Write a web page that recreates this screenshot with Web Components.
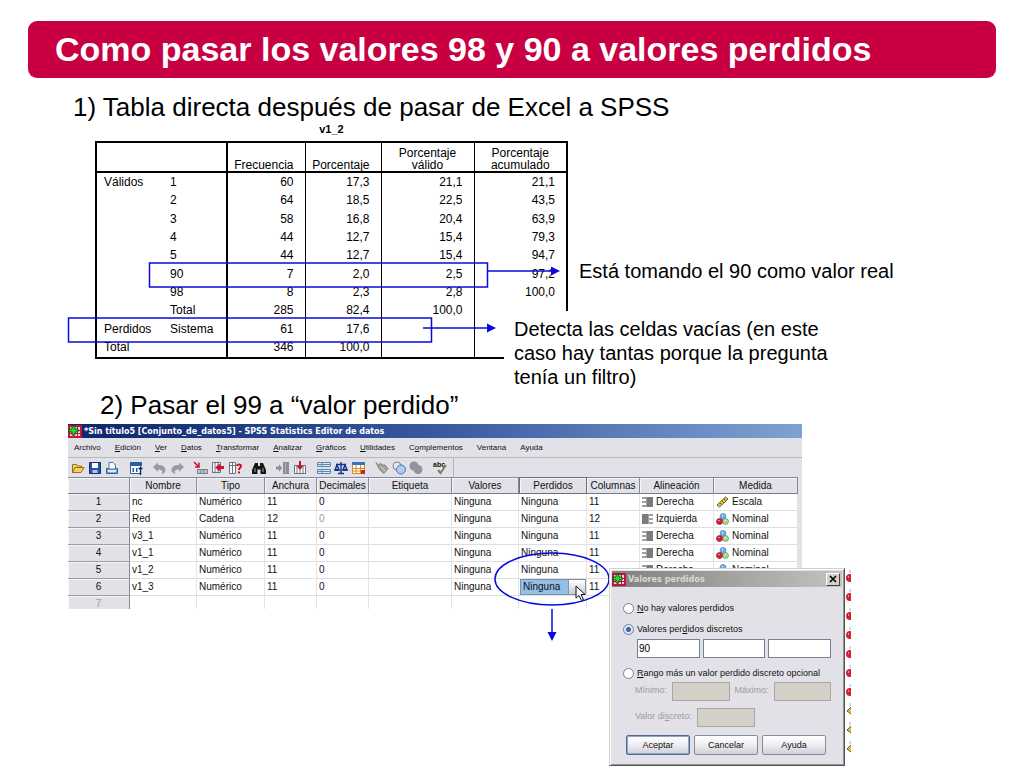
<!DOCTYPE html>
<html lang="es">
<head>
  <meta charset="UTF-8">
  <title>Valores perdidos</title>
<style>
:root {
  --accent-color: #c80041;
  --panel-color: #e2e1e7;
}

body {
  margin: 0;
  min-height: 100vh;
  background: white;
  color: black;
  font-family: "Liberation Sans", Arial, sans-serif;
}
</style>
</head>
<body>
<slide-page>
  <slide-title slot="title">Como pasar los valores 98 y 90 a valores perdidos</slide-title>

  <slide-step class="first">
    <span slot="heading">1) Tabla directa después de pasar de Excel a SPSS</span>
    <freq-table>v1_2</freq-table>
  </slide-step>

  <slide-step class="second">
    <span slot="heading">2) Pasar el 99 a “valor perdido”</span>
    <spss-window>
      <span slot="title">*Sin título5 [Conjunto_de_datos5] - SPSS Statistics Editor de datos</span>
      <spss-menu slot="bars"></spss-menu>
      <spss-toolbar slot="bars"></spss-toolbar>
      <variable-grid></variable-grid>
      <missing-dialog slot="over">Valores perdidos</missing-dialog>
    </spss-window>
  </slide-step>
</slide-page>

<script>
const define = (name, html, setup) => {
  const template = document.createElement("template");
  template.innerHTML = html;

  customElements.define(name, class extends HTMLElement {
    constructor() {
      super();
      this.attachShadow({ mode: "open" });
      this.shadowRoot.appendChild(template.content.cloneNode(true));
      if (setup) setup(this.shadowRoot);
    }
  });
};

const appIcon = `
  <svg class="app" width="14" height="13" viewBox="0 0 14 13" aria-hidden="true">
    <path fill="#c4143c" d="M0 0h14v13H0z"/>
    <path fill="#f6d8dc" d="M2 2h10v9H2z"/>
    <path stroke="#c4143c" d="M2 5.500h10M2 8.500h10M5.500 2v9M9.500 2v9"/>
    <path fill="#28d828" stroke="#053d05" stroke-width=".8" d="M4 1h3v3h3v3H7v3H4V7H1V4h3z"/>
  </svg>`;

define("slide-page", `
  <style>
    :host { display: block; box-sizing: border-box; min-height: 100vh; padding: 21px 28px 0; }
  </style>
  <slot name="title"></slot>
  <main><slot></slot></main>
`);

define("slide-title", `
  <style>
    :host { display: block; }
    h1 {
      margin: 0;
      padding: 0 27px;
      border-radius: 9px;
      background: var(--accent-color);
      color: white;
      font-size: 34px;
      line-height: 57px;
    }
  </style>
  <h1><slot></slot></h1>
`);

define("slide-step", `
  <style>
    :host { display: block; padding-left: 40px; }
    h2 {
      margin: 0;
      padding-left: 5px;
      font-size: 26px;
      font-weight: normal;
      line-height: 30px;
    }
    :host(.first) { padding-top: 14px; }
    :host(.second) { padding-top: 31px; }
    :host(.second) h2 { padding-left: 32px; padding-bottom: 4px; }
  </style>
  <h2><slot name="heading"></slot></h2>
  <slot></slot>
`);

// frequency table with its two marked rows
const freqRows = [
  ["Válidos", "1", "60", "17,3", "21,1", "21,1"],
  ["", "2", "64", "18,5", "22,5", "43,5"],
  ["", "3", "58", "16,8", "20,4", "63,9"],
  ["", "4", "44", "12,7", "15,4", "79,3"],
  ["", "5", "44", "12,7", "15,4", "94,7"],
  ["", "90", "7", "2,0", "2,5", "97,2"],
  ["", "98", "8", "2,3", "2,8", "100,0"],
  ["", "Total", "285", "82,4", "100,0", ""],
  ["Perdidos", "Sistema", "61", "17,6", "", ""],
  ["Total", "", "346", "100,0", "", ""],
];

define("freq-table", `
  <style>
    :host { display: block; position: relative; }
    table {
      margin-left: 27px;
      width: 473px;
      height: 218px;
      table-layout: fixed;
      border-collapse: collapse;
      font-size: 12px;
      line-height: 12px;
    }
    caption { height: 19px; font-size: 11px; font-weight: bold; line-height: 14px; }
    thead, tbody { border: 2px solid black; }
    th { font-weight: normal; padding: 0; }
    thead th { height: 28px; vertical-align: bottom; border-left: 1px solid black; }
    thead th.right { text-align: right; padding-right: 11px; }
    tbody th { text-align: left; padding: 0 0 1px 8px; }
    td { padding: 0 11px 1px 0; text-align: right; border-left: 1px solid black; }
    tbody th:first-child { padding-left: 7px; }
    thead th:first-child { border-left: 2px solid black; }
    thead th:nth-child(2), td:nth-child(3) { border-left: 2px solid black; }
    .note {
      position: absolute;
      background: white;
      padding: 0 10px;
      font-size: 20px;
      line-height: 24px;
    }
    .real { left: 501px; top: 137px; }
    .empty { left: 436px; top: 189px; width: 330px; padding-top: 6px; }
    svg { position: absolute; left: 0; top: 0; overflow: visible; }
  </style>
  <table>
    <caption><slot></slot></caption>
    <colgroup><col style="width:66px"><col style="width:65px"><col style="width:78px"><col style="width:76px"><col style="width:93px"><col style="width:93px"></colgroup>
    <thead>
      <tr>
        <th colspan="2"></th>
        <th class="right">Frecuencia</th>
        <th class="right">Porcentaje</th>
        <th>Porcentaje<br>válido</th>
        <th>Porcentaje<br>acumulado</th>
      </tr>
    </thead>
    <tbody></tbody>
  </table>
  <div class="note real">Está tomando el 90 como valor real</div>
  <div class="note empty">Detecta las celdas vacías (en este caso hay tantas porque la pregunta tenía un filtro)</div>
  <svg width="500" height="236" fill="none" stroke="#0a0adc" stroke-width="1.500" aria-hidden="true">
    <path d="M81.500 141h338v24h-338zM.500 196h363v24H.500zM420 149h66M355 206h66"/>
    <path fill="#0a0adc" stroke="none" d="M483 144.500l9 4.500-9 4.500zM419 201.500l9 4.500-9 4.500z"/>
  </svg>
`, (root) => {
  root.querySelector("tbody").innerHTML = freqRows.map(([group, value, ...data]) =>
    `<tr><th>${group}</th><th>${value}</th>${data.map((n) => `<td>${n}</td>`).join("")}</tr>`
  ).join("");
});

define("spss-window", `
  <style>
    :host { display: block; position: relative; max-width: 734px; }
    header {
      display: flex;
      align-items: center;
      gap: 2px;
      height: 14px;
      background: linear-gradient(90deg, #0d246c, #38589f 50%, #7fa2d2);
      color: white;
      font: bold 8px "DejaVu Sans", sans-serif;
      white-space: nowrap;
    }
    .marks { position: absolute; left: 420px; top: 121px; }
  </style>
  <header>${appIcon}<slot name="title"></slot></header>
  <slot name="bars"></slot>
  <slot></slot>
  <svg class="marks" width="130" height="100" fill="none" stroke="#0a0adc" stroke-width="1.500" aria-hidden="true">
    <ellipse cx="64" cy="34" rx="57" ry="26"/>
    <path d="M64 64v26"/>
    <path fill="#0a0adc" stroke="none" d="M59.500 87h9L64 96z"/>
  </svg>
  <slot name="over"></slot>
`);

define("spss-menu", `
  <style>
    :host { display: block; background: var(--panel-color); border-bottom: 1px solid #b9b8c0; }
    nav { display: flex; gap: 14px; height: 19px; padding-left: 6px; }
    button { padding: 0; border: 0; background: none; color: #111; font: 8px "Liberation Sans", sans-serif; }
  </style>
  <nav>
    <button>Archivo</button>
    <button><u>E</u>dición</button>
    <button><u>V</u>er</button>
    <button><u>D</u>atos</button>
    <button><u>T</u>ransformar</button>
    <button><u>A</u>nalizar</button>
    <button><u>G</u>ráficos</button>
    <button><u>U</u>tilidades</button>
    <button>C<u>o</u>mplementos</button>
    <button>Ventana</button>
    <button>Ayuda</button>
  </nav>
`);

// 14x14 glyphs; the third value opens a wider gap before the group
const tools = [
  ["Abrir", `<path fill="#f4cf63" stroke="#94701c" d="M1.500 11.500v-8h4l1 1.500h4v2M1.500 11.500l2.500-5h9l-3 5z"/>`],
  ["Guardar", `<path fill="#2453b4" stroke="#12306f" d="M1.500 1.500h11v11h-11z"/><path fill="#fff" d="M4 2h6v5H4z"/><path fill="#b9c6e4" d="M4.500 9h5v3h-5z"/>`],
  ["Imprimir", `<path fill="#7ba5d4" stroke="#355e8d" d="M1.500 7.500h11v5h-11z"/><path fill="#fff" stroke="#4674a4" d="M4 8V1.500h4L10.500 4v4z"/><path fill="#dce9f6" d="M3 9h8v2H3z"/>`],
  ["Recuperar", `<path fill="#fff" stroke="#2860a2" d="M1.500 2.500h10v10h-10z"/><path fill="#2860a2" d="M1 1h12v4H1zM3.500 7h1.500v4H3.500zM7 7h1.500v4H7z"/><path stroke="#10253c" stroke-width="1.400" d="M11.500 6v8M9.500 7.500h4"/>`, 1],
  ["Deshacer", `<path fill="#9a9aa0" d="M0 6l5-4.500V4c5 0 7.500 2 7.500 5 0 2.500-2 4-4.500 4 2.500-2 1.500-4.500-3-4.500V11z"/>`, 1],
  ["Rehacer", `<path fill="#9a9aa0" d="M14 6L9 1.500V4C4 4 1.500 6 1.500 9c0 2.500 2 4 4.500 4C3.500 11 4.500 8.500 9 8.500V11z"/>`],
  ["Ir a caso", `<path fill="#c4c6cf" stroke="#777d88" d="M3.500 8.500h10v4h-10z"/><path stroke="#777d88" d="M7 9v3M10 9v3"/><path stroke="#c8102e" stroke-width="1.500" d="M0 1l4.500 4.500M5 1.500V6H1"/>`, 1],
  ["Ir a variable", `<path fill="#fff" stroke="#68717f" d="M1.500 1.500h8v10h-8z"/><path stroke="#68717f" d="M4 2v9M7 2v9"/><path fill="#d0112e" d="M4 6.500L9 2.500v2.500h4v3H9v2.500z"/>`],
  ["Variables", `<path fill="#fff" stroke="#68717f" d="M1.500 1.500h6v11h-6z"/><path stroke="#68717f" d="M4.500 2v10M2 4.500h5"/><path stroke="#d0112e" stroke-width="2" d="M9 5c0-2 4-2 4 0 0 2-2 1.500-2 4M11 10.500v2"/>`],
  ["Buscar", `<path fill="#151515" d="M3 2h3v3h2V2h3l3 7v4H8.500V8.500h-3V13H0V9z"/><path stroke="#fff" stroke-width=".6" d="M3 7v4M11 7v4"/>`, 1],
  ["Insertar caso", `<path fill="#8c8c94" d="M7 1h6v12H7zM0 5.500h3V3l3 4-3 4V8.500H0z"/><path stroke="#b4b4bc" d="M9.500 2v10"/>`, 1],
  ["Insertar variable", `<path fill="#fff" stroke="#68717f" d="M1.500 4.500h11v8h-11z"/><path stroke="#68717f" d="M4 5v7M10 5v7M7 8v4"/><path fill="#d0112e" d="M6 0h2v5h2.500L7 9 3.500 5H6z"/>`],
  ["Segmentar archivo", `<path fill="#d9e9f6" stroke="#5c89b0" d="M.500 1.500h13v4H.500zM.500 8.500h13v4H.500z"/><path stroke="#5c89b0" d="M5 2v3M5 9v3M1 3.500h12M1 10.500h12"/>`, 1],
  ["Ponderar casos", `<path fill="none" stroke="#16368d" stroke-width="1.500" d="M7 1v11M4 12.500h6M2 3.500h10M3 4L1 9h4zM11 4L9 9h4z"/><path fill="#16368d" d="M0 8h6L4.500 10h-3zM8 8h6l-1.500 2h-3z"/>`],
  ["Etiquetas de valor", `<path fill="#fff" stroke="#d48b20" d="M1.500 2.500h12v10h-12z"/><path fill="#3974b7" d="M1 1h13v3H1z"/><path stroke="#d48b20" d="M2 7.500h11M2 10h7M5 4v8M9.500 4v8"/><path fill="#c22c24" d="M10 9h4v4h-4z"/>`],
  ["Conjuntos de variables", `<path fill="#a5a59f" stroke="#85857f" d="M1 1.500l3 3 1.500-2.500 1.500 2h3l3 3.500-4 5-4.500-4z"/><path stroke="#d8d8d4" d="M6 6l4 4"/>`, 1],
  ["Usar conjuntos", `<circle cx="5" cy="5" r="4" fill="#e9e9ee" stroke="#7c8390"/><circle cx="9" cy="8.500" r="4.500" fill="#b3cdec" stroke="#4a72b0"/>`],
  ["Mostrar todas", `<circle cx="5" cy="5" r="4.500" fill="#929298"/><circle cx="9" cy="8.500" r="4.500" fill="#929298"/>`],
  ["Ortografía", `<text x="0" y="6" font-size="7" font-weight="bold" fill="#111">abc</text><path fill="none" stroke="#77855f" stroke-width="2" d="M5 9l2.500 3L13 4"/>`, 1],
];

define("spss-toolbar", `
  <style>
    :host { display: block; background: var(--panel-color); }
    div { display: flex; align-items: center; gap: 3px; width: 382px; height: 19px; padding-left: 3px; border-right: 1px solid #b4b3bb; }
    button { display: grid; flex: none; padding: 0; border: 0; background: none; }
    .wide { margin-left: 7px; }
    svg { width: 14px; height: 14px; overflow: visible; }
  </style>
  <div role="toolbar"></div>
`, (root) => {
  root.querySelector("div").innerHTML = tools.map(([label, shape, wide]) =>
    `<button class="${wide ? "wide" : ""}" aria-label="${label}"><svg viewBox="0 0 14 14" fill="none">${shape}</svg></button>`
  ).join("");
});

const alignRight = `<svg width="11" height="10" viewBox="0 0 11 10"><path stroke="#444" stroke-width="1.200" d="M0 1h11M4 3h7M0 5h11M4 7h7M0 9h11"/><path fill="#444" d="M5 0h6v10H5z" opacity=".4"/></svg>`;
const alignLeft = `<svg width="11" height="10" viewBox="0 0 11 10"><path stroke="#444" stroke-width="1.200" d="M0 1h11M0 3h7M0 5h11M0 7h7M0 9h11"/><path fill="#444" d="M0 0h6v10H0z" opacity=".4"/></svg>`;
const scaleIcon = `<svg width="13" height="12" viewBox="0 0 13 12"><path fill="#e2c84a" stroke="#6d5b14" d="M1 9l8.500-8L12 3 3.500 11z"/><path stroke="#6d5b14" d="M4 7l1.500 1.500M6 5l1.500 1.500M8 3l1.500 1.500"/></svg>`;
const nominalIcon = `<svg width="13" height="12" viewBox="0 0 13 12"><circle cx="7" cy="3.500" r="3" fill="#78aee5" stroke="#3a72b4" stroke-width=".6"/><circle cx="9.500" cy="8.500" r="3" fill="#a4d890" stroke="#4c8a44" stroke-width=".6"/><circle cx="3.500" cy="8.500" r="3" fill="#d42038" stroke="#8c0c20" stroke-width=".6"/><path stroke="#fff" d="M2.500 7.500h1M6 2.500h1M9 7.500h1"/></svg>`;

const variables = [
  ["nc", "Numérico", "11", "Derecha", "Escala"],
  ["Red", "Cadena", "12", "Izquierda", "Nominal"],
  ["v3_1", "Numérico", "11", "Derecha", "Nominal"],
  ["v1_1", "Numérico", "11", "Derecha", "Nominal"],
  ["v1_2", "Numérico", "11", "Derecha", "Nominal"],
  ["v1_3", "Numérico", "11", "", ""],
];

define("variable-grid", `
  <style>
    :host { display: block; height: 132px; overflow: hidden; background: linear-gradient(270deg, var(--panel-color) 4px, white 4px); }
    table {
      width: calc(100% - 4px);
      table-layout: fixed;
      border-collapse: separate;
      border-spacing: 0;
      font-size: 10px;
      line-height: 12px;
      color: #111;
    }
    th, td { box-sizing: border-box; height: 17px; padding: 0; font-weight: normal; white-space: nowrap; }
    th {
      background: var(--panel-color);
      border-right: 1px solid #858b9c;
      border-bottom: 1px solid #9b9ba7;
      box-shadow: inset 1px 1px #f6f6fa;
    }
    thead th { border-top: 1px solid #858b9c; border-bottom-color: #6f7c92; }
    thead th.active { border: 1px solid #667085; }
    td { padding-left: 2px; border-right: 1px solid #e3e3e8; border-bottom: 1px solid #dedee4; }
    .dim { color: #999; }
    .icon span { display: flex; align-items: center; gap: 3px; }
    td.edit { padding: 0 0 0 1px; }
    .edit div { display: flex; height: 16px; border: 1px solid #7d92a8; box-sizing: border-box; background: #94c0e8; }
    .edit span { flex: 1; padding: 1px 2px 0; }
    .edit button { position: relative; width: 17px; padding: 0; border: 0; border-left: 1px solid #8895a4; background: linear-gradient(#fff, #c6ccd5); }
    .edit svg { position: absolute; left: 6px; top: 5px; overflow: visible; }
  </style>
  <table>
    <colgroup><col style="width:62px"><col style="width:67px"><col style="width:68px"><col style="width:52px"><col style="width:52px"><col style="width:83px"><col style="width:67px"><col style="width:68px"><col style="width:53px"><col style="width:74px"><col></colgroup>
    <thead>
      <tr><th></th><th>Nombre</th><th>Tipo</th><th>Anchura</th><th>Decimales</th><th>Etiqueta</th><th>Valores</th><th class="active">Perdidos</th><th>Columnas</th><th>Alineación</th><th>Medida</th></tr>
    </thead>
    <tbody></tbody>
  </table>
`, (root) => {
  const editor = `<td class="edit"><div><span>Ninguna</span><button aria-label="Editar"><svg width="12" height="17" viewBox="0 0 12 17"><path fill="#fff" stroke="#111" d="M1 1v12l3-2.500 2.500 5 2-1-2.500-5h4z"/></svg></button></div></td>`;

  root.querySelector("tbody").innerHTML = variables.map(([name, type, width, align, measure], i) => `
    <tr>
      <th>${i + 1}</th>
      <td>${name}</td>
      <td>${type}</td>
      <td>${width}</td>
      <td class="${i == 1 ? "dim" : ""}">0</td>
      <td></td>
      <td>Ninguna</td>
      ${i == 5 ? editor : "<td>Ninguna</td>"}
      <td>${width}</td>
      <td class="icon">${align && `<span>${align == "Derecha" ? alignRight : alignLeft}${align}</span>`}</td>
      <td class="icon">${measure && `<span>${measure == "Escala" ? scaleIcon : nominalIcon}${measure}</span>`}</td>
    </tr>`
  ).join("") + `<tr><th class="dim">7</th>${"<td></td>".repeat(10)}</tr>`;
});

define("missing-dialog", `
  <style>
    :host { position: absolute; left: 541px; top: 144px; display: flex; }
    form {
      box-sizing: border-box;
      width: 236px;
      height: 198px;
      padding: 2px;
      background: var(--panel-color);
      border: 1px solid;
      border-color: #d4d0c8 #55534f #55534f #d4d0c8;
      box-shadow: inset 1px 1px #fff, inset -1px -1px #96948e;
      font-size: 9px;
      line-height: 12px;
      color: #111;
    }
    header {
      display: flex;
      align-items: center;
      gap: 2px;
      height: 16px;
      padding-right: 2px;
      background: linear-gradient(90deg, #808080, #c3c2c0);
      color: #dcdad4;
      font: bold 9px "DejaVu Sans Condensed", "DejaVu Sans", sans-serif;
    }
    header span { flex: 1; }
    header button {
      display: grid;
      place-items: center;
      width: 14px;
      height: 13px;
      padding: 0;
      background: #d4d0c8;
      border: 1px solid;
      border-color: #fff #444 #444 #fff;
    }
    .body { padding: 15px 11px 0; }
    .choice { display: flex; align-items: center; gap: 3px; height: 12px; white-space: nowrap; }
    .choice + .choice, .fields + .choice { margin-top: 9px; }
    input[type="radio"] {
      appearance: none;
      flex: none;
      box-sizing: border-box;
      width: 11px;
      height: 11px;
      margin: 0;
      border: 1px solid #71829a;
      border-radius: 50%;
      background: white;
    }
    input[type="radio"]:checked { background: radial-gradient(#3c64a0 2px, #dbe7f5 3px); }
    input[type="text"] {
      flex: 1;
      box-sizing: border-box;
      min-width: 0;
      height: 19px;
      padding: 0 1px;
      border: 1px solid #6f8296;
      background: white;
      font: 10px "Liberation Sans", sans-serif;
    }
    input[type="text"]:disabled { background: #d4d0c8; border-color: #a8a7a8; }
    .fields { display: flex; gap: 3px; padding: 4px 0 0 14px; }
    .range, .value { display: flex; gap: 5px; padding: 3px 0 0 12px; line-height: 16px; color: #9c9ba1; }
    .value { padding: 7px 76px 0 12px; }
    .buttons { display: flex; gap: 4px; padding: 8px 5px 0 3px; }
    .buttons button {
      flex: 1;
      height: 20px;
      padding: 0;
      border: 1px solid #858c98;
      border-radius: 2px;
      background: linear-gradient(#fff, #eeeef2 50%, #cfd0d8);
      color: #111;
      font: 9px "Liberation Sans", sans-serif;
    }
    .buttons .main { border-color: #52698d; box-shadow: inset 0 0 0 1px #8da7ca; }
    .behind { background: white; }
  </style>
  <form>
    <header>
      ${appIcon}
      <span><slot></slot></span>
      <button type="button" aria-label="Cerrar"><svg width="8" height="8" viewBox="0 0 8 8"><path stroke="#000" stroke-width="1.600" d="M1 1l6 6M7 1L1 7"/></svg></button>
    </header>
    <div class="body">
      <div class="choice"><input type="radio" name="kind" id="none"><label for="none"><u>N</u>o hay valores perdidos</label></div>
      <div class="choice"><input type="radio" name="kind" id="discrete" checked><label for="discrete">Valores per<u>d</u>idos discretos</label></div>
      <div class="fields">
        <input type="text" value="90" aria-label="Valor 1">
        <input type="text" aria-label="Valor 2">
        <input type="text" aria-label="Valor 3">
      </div>
      <div class="choice"><input type="radio" name="kind" id="range"><label for="range"><u>R</u>ango más un valor perdido discreto opcional</label></div>
      <div class="range">
        <label for="min">Mínimo:</label><input type="text" id="min" disabled>
        <label for="max">Máximo:</label><input type="text" id="max" disabled>
      </div>
      <div class="value">
        <label for="value">Valor di<u>s</u>creto:</label><input type="text" id="value" disabled>
      </div>
      <div class="buttons">
        <button type="button" class="main">Aceptar</button>
        <button type="button">Cancelar</button>
        <button type="button">Ayuda</button>
      </div>
    </div>
  </form>
  <svg class="behind" width="6" height="198" aria-hidden="true"></svg>
`, (root) => {
  // edge of the rows that stay visible behind the dialog
  const edge = root.querySelector(".behind");
  for (let i = 0; i < 10; i++) {
    const y = 10 + i * 19;
    const shape = i < 7
      ? `<circle cx="5" cy="${y}" r="4" fill="#d42038"/><path stroke="#fff" d="M3 ${y - 1}h1"/>`
      : `<path fill="#d8c04a" stroke="#6d5b14" d="M6 ${y - 4}l-4 4 4 3"/>`;
    edge.innerHTML += `<path stroke="#8fb4dc" d="M5 ${y - 8}v3"/>${shape}`;
  }
});
</script>
</body>
</html>
